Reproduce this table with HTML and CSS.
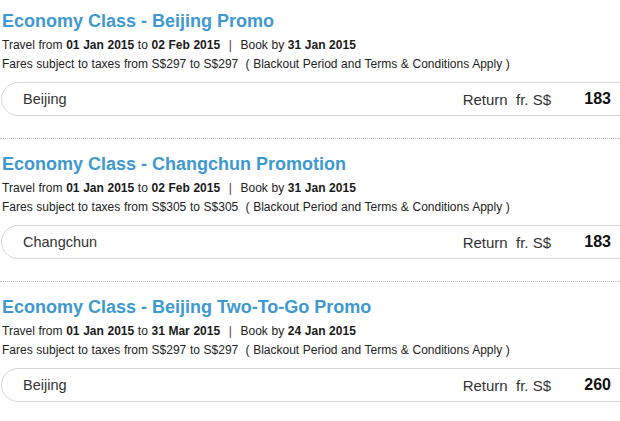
FILE: index.html
```html
<!DOCTYPE html>
<html>
<head>
<meta charset="utf-8">
<link rel="stylesheet" href="styles.css">
</head>
<body>
<div class="list">
  <div class="promo">
    <h2 class="title">Economy Class - Beijing Promo</h2>
    <p class="line">Travel from <b>01 Jan 2015</b> to <b>02 Feb 2015</b> <span class="sep">|</span> Book by <b>31 Jan 2015</b></p>
    <p class="line">Fares subject to taxes from S$297 to S$297 &nbsp;( Blackout Period and Terms &amp; Conditions Apply )</p>
    <div class="fare">
      <span class="city">Beijing</span>
      <span class="ret">Return &nbsp;fr. S$</span>
      <span class="price">183</span>
    </div>
  </div>
  <div class="promo">
    <h2 class="title">Economy Class - Changchun Promotion</h2>
    <p class="line">Travel from <b>01 Jan 2015</b> to <b>02 Feb 2015</b> <span class="sep">|</span> Book by <b>31 Jan 2015</b></p>
    <p class="line">Fares subject to taxes from S$305 to S$305 &nbsp;( Blackout Period and Terms &amp; Conditions Apply )</p>
    <div class="fare">
      <span class="city">Changchun</span>
      <span class="ret">Return &nbsp;fr. S$</span>
      <span class="price">183</span>
    </div>
  </div>
  <div class="promo">
    <h2 class="title">Economy Class - Beijing Two-To-Go Promo</h2>
    <p class="line">Travel from <b>01 Jan 2015</b> to <b>31 Mar 2015</b> <span class="sep">|</span> Book by <b>24 Jan 2015</b></p>
    <p class="line">Fares subject to taxes from S$297 to S$297 &nbsp;( Blackout Period and Terms &amp; Conditions Apply )</p>
    <div class="fare">
      <span class="city">Beijing</span>
      <span class="ret">Return &nbsp;fr. S$</span>
      <span class="price">260</span>
    </div>
  </div>
</div>
</body>
</html>
```
FILE: styles.css
```css
html, body {
  margin: 0;
  padding: 0;
  background: #fff;
}
body {
  font-family: "Liberation Sans", Arial, sans-serif;
  color: #333;
  width: 640px;
}
.list {
  display: flex;
  flex-direction: column;
}
.promo {
  padding: 14px 0 22px 2px;
  border-bottom: 1px dotted #bbb;
}
.promo:first-child {
  padding-top: 10px;
}
.title {
  margin: 0 0 4px 0;
  font-size: 18px;
  line-height: 22px;
  font-weight: bold;
  color: #3d99cf;
}
.line {
  margin: 0;
  font-size: 12px;
  line-height: 19px;
  color: #222;
  word-spacing: 0.3px;
}
.line b {
  color: #1a1a1a;
}
.sep {
  color: #5a2d6e;
  margin: 0 5px;
}
.fare {
  margin: 8px 0 0 -1px;
  height: 32px;
  border: 1px solid #d6d6d6;
  border-radius: 17px 0 0 17px;
  display: flex;
  align-items: center;
  padding-left: 21px;
  font-size: 14.5px;
  color: #333;
}
.city {
  flex: 1;
}
.ret {
  font-size: 15px;
}
.price {
  font-size: 16px;
  font-weight: bold;
  color: #111;
  width: 60px;
  text-align: right;
  margin-right: 28px;
}
```
